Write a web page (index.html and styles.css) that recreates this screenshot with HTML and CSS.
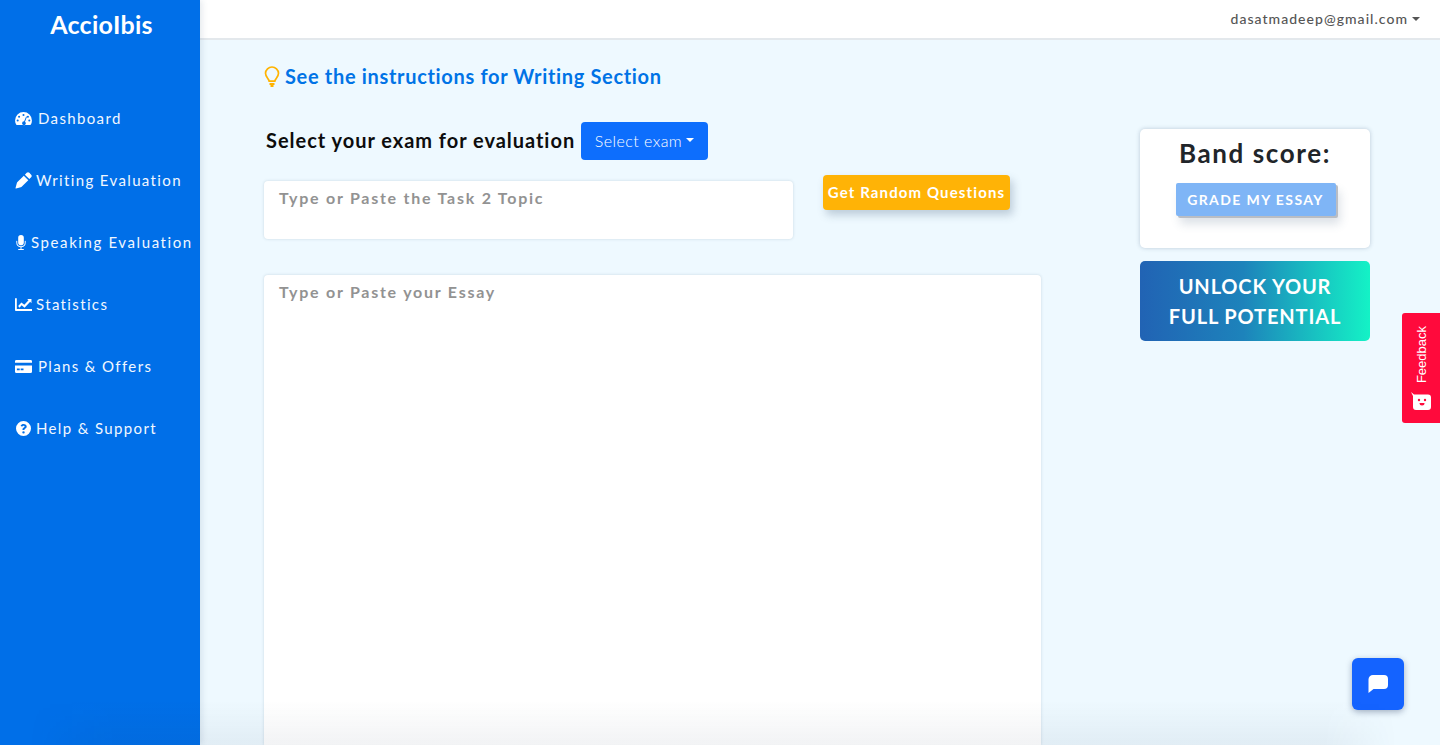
FILE: index.html
```html
<!DOCTYPE html>
<html lang="en">
<head>
<meta charset="utf-8">
<title>AccioIbis</title>
<link rel="stylesheet" href="styles.css">
</head>
<body>
<div class="app">
  <aside class="sidebar">
    <div class="brand">AccioIbis</div>
    <nav class="nav">
      <a class="nav-item gap-dash"><svg class="ico" viewBox="0 0 18 16"><path fill-rule="evenodd" d="M9 1a9 9 0 0 0-9 9c0 1.600.4 3.100 1.200 4.400.2.400.6.600 1 .6h13.600c.4 0 .8-.2 1-.6A9 9 0 0 0 18 10a9 9 0 0 0-9-9zm0 2.200a1.100 1.100 0 1 1 0 2.200 1.100 1.100 0 0 1 0-2.200zM4.300 5a1.100 1.100 0 1 1 0 2.200 1.100 1.100 0 0 1 0-2.200zm9.400 0a1.100 1.100 0 1 1 0 2.200 1.100 1.100 0 0 1 0-2.200zM2.800 9a1.100 1.100 0 1 1 0 2.200 1.100 1.100 0 0 1 0-2.200zm12.400 0a1.100 1.100 0 1 1 0 2.200 1.100 1.100 0 0 1 0-2.200zM11.800 5.800l.9.400-2.100 5.200a2 2 0 1 1-3.100 1.600 2 2 0 0 1 2-2h.2z"/></svg>Dashboard</a>
      <a class="nav-item gap-write"><svg class="ico ico-pen" viewBox="0 0 16 16"><path d="M11 .8 9.300 2.500l4.200 4.200L15.200 5c.7-.7.700-1.800 0-2.500L13.500.8c-.7-.7-1.800-.7-2.500 0zM8.300 3.500 2.300 9.500c-.3.300-.5.700-.6 1.100L.5 15c-.1.300.2.600.5.500l4.400-1.200c.4-.1.800-.3 1.100-.6l6-6z"/></svg>Writing Evaluation</a>
      <a class="nav-item gap-speak"><svg class="ico ico-mic" viewBox="0 0 11 16"><path d="M5.500 0A3 3 0 0 0 2.500 3v5a3 3 0 0 0 6 0V3a3 3 0 0 0-3-3z"/><path d="M.5 6.500a.5.5 0 0 1 1 0V8a4 4 0 0 0 8 0V6.500a.5.500 0 0 1 1 0V8a5 5 0 0 1-4.500 5v1.800H8a.6.6 0 0 1 0 1.200H3a.6.6 0 0 1 0-1.200h2V13A5 5 0 0 1 .5 8z"/></svg>Speaking Evaluation</a>
      <a class="nav-item gap-write"><svg class="ico" viewBox="0 0 16 14"><path d="M0 1h1.700v10.300H16V13H.8a.8.8 0 0 1-.8-.8z"/><path d="M3 8.500 6 5l2.800 2.300L12.700 3 11.500 1.800h4V5.800L14.300 4.500 9 10 6.200 7.700 4.300 10z"/></svg>Statistics</a>
      <a class="nav-item gap-dash"><svg class="ico" viewBox="0 0 18 14"><path d="M1.500 0h15A1.500 1.500 0 0 1 18 1.500V3H0V1.500A1.500 1.500 0 0 1 1.500 0z"/><path fill-rule="evenodd" d="M0 6h18v6.500a1.500 1.500 0 0 1-1.500 1.500h-15A1.500 1.500 0 0 1 0 12.500zM2 9v2h3V9zm4 0v2h3V9z"/></svg>Plans &amp; Offers</a>
      <a class="nav-item gap-write"><svg class="ico ico-q" viewBox="0 0 16 16"><path fill-rule="evenodd" d="M8 0a8 8 0 1 0 0 16A8 8 0 0 0 8 0zm.1 3.200c1.900 0 3.300 1.100 3.300 2.700 0 1.300-.8 1.900-1.600 2.400-.6.400-.8.600-.8 1.100v.3H6.900v-.5c0-1.100.6-1.700 1.300-2.200.6-.4 1-.6 1-1.100s-.5-.9-1.100-.9c-.7 0-1.200.4-1.600 1L4.900 5c.7-1.100 1.700-1.800 3.200-1.800zM8 10.800a1.300 1.300 0 1 1 0 2.600 1.300 1.300 0 0 1 0-2.600z"/></svg>Help &amp; Support</a>
    </nav>
  </aside>
  <div class="main">
    <header class="topbar"><span class="user">dasatmadeep@gmail.com</span><span class="caret caret-dark"></span></header>
    <div class="content">
      <div class="form-col">
        <a class="instructions">
          <svg class="bulb" viewBox="0 0 16 21" fill="none" stroke="#ffb300" stroke-width="1.700"><path d="M5.200 15.200c0-2.200-3.700-4-3.700-8A6.500 6.500 0 0 1 8 1a6.500 6.500 0 0 1 6.500 6.200c0 4-3.700 5.800-3.700 8z"/><path d="M5.500 18h5M6.500 20h3" stroke-width="1.800"/></svg>
          <span>See the instructions for Writing Section</span>
        </a>
        <div class="select-row">
          <h2 class="select-title">Select your exam for evaluation</h2>
          <button class="select-btn">Select exam<span class="caret"></span></button>
        </div>
        <div class="topic-row">
          <div class="field topic">Type or Paste the Task 2 Topic</div>
          <button class="random-btn">Get Random Questions</button>
        </div>
        <div class="field essay">Type or Paste your Essay</div>
      </div>
      <div class="side-col">
        <section class="score-card">
          <h3 class="score-title">Band score:</h3>
          <button class="grade-btn">GRADE MY ESSAY</button>
        </section>
        <a class="unlock">UNLOCK YOUR<br>FULL POTENTIAL</a>
      </div>
    </div>
  </div>
</div>
<a class="feedback"><span class="feedback-text">Feedback</span><svg class="feedback-ico" viewBox="0 0 20 18"><path fill="#fff" d="M0 0l3 2.500h14a3 3 0 0 1 3 3V15a3 3 0 0 1-3 3H5a3 3 0 0 1-3-3V4z"/><circle cx="8" cy="8" r="1.200" fill="#ff0a3c"/><circle cx="14" cy="8" r="1.200" fill="#ff0a3c"/><path fill="#ff0a3c" d="M8.500 11h5a2.500 2.500 0 0 1-5 0z"/></svg></a>
<button class="chat"><svg viewBox="0 0 20 20" class="chat-ico"><path fill="#fff" d="M5 1h11a4 4 0 0 1 4 4v6a4 4 0 0 1-4 4H5.500L.5 19V5.500A4.500 4.500 0 0 1 5 1z"/></svg></button>
<div class="bottom-fade"></div>
</body>
</html>
```
FILE: styles.css
```css
* { box-sizing: border-box; }
html, body { margin: 0; height: 745px; overflow: hidden; }
body { font-family: Lato, "Noto Sans", sans-serif; background: #eef9ff; color: #212529; }
.app { display: flex; height: 745px; }

.sidebar { width: 200px; flex: none; background: #006fe8; color: #fff; position: relative; z-index: 2; box-shadow: 2px 0 6px rgba(40,70,110,.12); }
.brand { font-size: 25px; font-weight: 700; line-height: 30px; text-align: center; padding-top: 9px; height: 70px; letter-spacing: .3px; padding-left: 3px; }
.nav { display: flex; flex-direction: column; padding: 17px 0 0 15px; }
.nav-item { display: flex; align-items: center; height: 62px; font-size: 15px; letter-spacing: 1.36px; white-space: nowrap; color: #f1f7ff; }
.ico { width: 17px; height: 15px; fill: #fff; flex: none; }
.ico-pen { height: 17px; }
.gap-dash .ico { margin-right: 6px; }
.gap-write .ico { margin-right: 4px; }
.gap-speak .ico { margin-right: 4px; width: 12px; height: 15px; }
.gap-speak { letter-spacing: 1.6px; }

.main { flex: 1; min-width: 0; display: flex; flex-direction: column; }
.topbar { height: 40px; flex: none; background: #fff; border-bottom: 2px solid #e3e8ec; display: flex; align-items: center; justify-content: flex-end; padding: 0 20px 1px 0; font-size: 14px; font-weight: 500; color: #555; letter-spacing: 1.03px; }
.caret { display: inline-block; width: 0; height: 0; margin-left: 4px; border-top: 4px solid #fff; border-left: 4px solid transparent; border-right: 4px solid transparent; }
.caret-dark { border-top-color: #555; margin-left: 4px; }

.content { flex: 1; display: flex; gap: 99px; padding: 0 0 0 64px; min-height: 0; }
.form-col { width: 777px; flex: none; display: flex; flex-direction: column; }
.instructions { display: flex; align-items: center; height: 24px; margin-top: 24px; color: #0073e6; font-size: 20px; font-weight: 700; white-space: nowrap; letter-spacing: .67px; }
.bulb { width: 16px; height: 21px; margin-right: 5px; flex: none; }
.select-row { display: flex; align-items: center; margin-top: 34px; padding-left: 2px; }
.select-title { margin: 0 6px 2px 0; font-size: 20px; font-weight: 700; color: #0d0d0d; white-space: nowrap; letter-spacing: .97px; width: 309px; }
.select-btn { width: 127px; height: 38px; background: #0d6efd; color: #fff; border: 0; border-radius: 4px; font: 300 16px Lato, sans-serif; letter-spacing: .45px; padding: 0 0 2px; display: flex; align-items: center; justify-content: center; }
.topic-row { display: flex; align-items: flex-start; margin-top: 21px; }
.field { background: #fff; border-radius: 4px; box-shadow: 0 0 3px rgba(60,90,120,.22); color: #929292; font-size: 16px; font-weight: 700; letter-spacing: 1.75px; padding: 7px 15px; line-height: 20px; }
.topic { width: 529px; height: 58px; }
.random-btn { width: 187px; height: 35px; margin: -6px 0 0 30px; background: #ffb306; color: #fff; border: 0; border-radius: 4px; font: 700 15px Lato, sans-serif; letter-spacing: 1.12px; padding: 0 0 2px; box-shadow: 3px 5px 8px rgba(60,90,120,.28); }
.essay { margin-top: 36px; flex: 1; min-height: 0; border-radius: 4px 4px 0 0; }

.side-col { width: 230px; flex: none; padding-top: 89px; display: flex; flex-direction: column; gap: 13px; }
.score-card { height: 119px; background: #fff; border-radius: 5px; box-shadow: 0 0 4px rgba(60,90,120,.3); display: flex; flex-direction: column; align-items: center; padding-top: 8px; }
.score-title { margin: 0; font-size: 26px; line-height: 32px; font-weight: 700; color: #212529; letter-spacing: 1.6px; }
.grade-btn { width: 160px; height: 33px; margin: 14px 0 0 1px; background: #7fb5f6; color: #fff; border: 0; border-radius: 2px; font: 700 14px Lato, sans-serif; letter-spacing: 1.4px; padding: 0 0 1px; box-shadow: 2px 2px 0 #b9bdc4, 4px 8px 10px rgba(60,90,120,.18); }
.unlock { height: 80px; border-radius: 5px; background: linear-gradient(90deg, #2163b4 0%, #1d83bb 45%, #14f2c6 100%); color: #fff; display: block; text-align: center; font-size: 20px; font-weight: 700; line-height: 30px; letter-spacing: .85px; padding-top: 10px; }

.feedback { position: fixed; left: 1402px; top: 313px; width: 38px; height: 110px; background: #ff0a3c; border-radius: 3px 0 0 3px; display: flex; flex-direction: column; align-items: center; color: #fff; }
.feedback-text { writing-mode: vertical-rl; transform: rotate(180deg); font: 400 13px "Liberation Sans", sans-serif; margin-top: 13px; }
.feedback-ico { width: 20px; height: 18px; position: absolute; left: 9px; bottom: 13px; }
.chat { position: fixed; left: 1352px; top: 658px; width: 52px; height: 52px; border: 0; border-radius: 6px; background: #1463ff; box-shadow: 0 2px 6px rgba(20,40,80,.35); padding: 0; display: flex; align-items: center; justify-content: center; }
.chat-ico { width: 20px; height: 20px; }
.bottom-fade { position: fixed; left: 0; right: 0; bottom: 0; height: 45px; z-index: 5; pointer-events: none; background: linear-gradient(180deg, rgba(30,50,80,0) 0%, rgba(30,50,80,.06) 100%); -webkit-mask-image: linear-gradient(90deg, transparent 2%, #000 8%, #000 92%, transparent 97%); mask-image: linear-gradient(90deg, transparent 2%, #000 8%, #000 92%, transparent 97%); }
```
